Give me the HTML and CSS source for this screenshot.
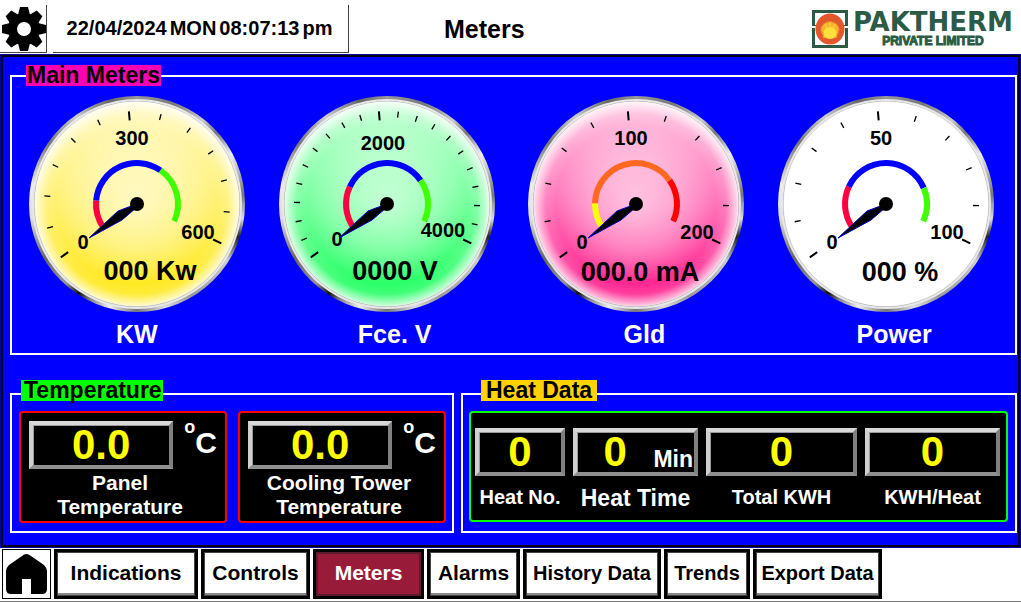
FILE: index.html
```
<!DOCTYPE html>
<html lang="en">
<head>
    <meta charset="UTF-8">
    <meta name="viewport" content="width=device-width, initial-scale=1.0">
    <title>Meters</title>
    <link rel="stylesheet" href="styles.css">
</head>
<body>
    <header class="topbar">
        <button class="settings-btn" aria-label="Settings">
            <svg viewBox="0 0 46 48" width="46" height="48">
                <g transform="translate(24 24)">
                    <circle r="16"/>
                    <path id="cog" d="M-6 -14L-4 -22H4L6 -14V14L4 22H-4L-6 14Z"/>
                    <use href="#cog" transform="rotate(45)"/>
                    <use href="#cog" transform="rotate(90)"/>
                    <use href="#cog" transform="rotate(135)"/>
                    <circle r="7" fill="#fff"/>
                </g>
            </svg>
        </button>
        <time class="clock" datetime="2024-04-22T20:07:13">
            <span>22/04/2024</span>
            <span>MON</span>
            <span>08:07:13</span>
            <span>pm</span>
        </time>
        <h1 class="page-title">Meters</h1>
        <div class="logo">
            <svg viewBox="0 0 36 38" width="36" height="38" aria-hidden="true">
                <path d="M1.500 15V1.500H34.500V15M1.500 18V36.500H34.500V18" fill="none" stroke="#2b5b45" stroke-width="3"/>
                <path d="M0 15.500H36" stroke="#2b5b45" stroke-width="1"/>
                <ellipse cx="18" cy="19" rx="14.500" ry="15.500" fill="#e2572b"/>
                <ellipse cx="18" cy="20" rx="9.500" ry="9" fill="#f0902d"/>
                <path d="M9 20a9 8 0 0 1 18 0l-2 4v4H11v-4Z" fill="#f7b52f" stroke="#e8782c" stroke-width="1" stroke-dasharray="2 1"/>
                <ellipse cx="18" cy="23" rx="6.500" ry="6" fill="#fce03c"/>
                <path d="M18 12v6M13 14l2 5M23 14l-2 5" stroke="#fbd23a" stroke-width="1"/>
            </svg>
            <div class="logo-text">
                <span class="logo-name">PAKTHERM</span>
                <span class="logo-sub">PRIVATE LIMITED</span>
            </div>
        </div>
    </header>

    <main class="screen">
        <section class="panel main-meters">
            <h2 class="panel-title pink">Main Meters</h2>
            <div class="meters">
                <figure class="meter">
                    <div class="bezel"><svg class="gauge" data-gauge="kw" viewBox="-108 -108 216 216"></svg></div>
                    <figcaption>KW</figcaption>
                </figure>
                <figure class="meter">
                    <div class="bezel"><svg class="gauge" data-gauge="volt" viewBox="-108 -108 216 216"></svg></div>
                    <figcaption class="shifted">Fce. V</figcaption>
                </figure>
                <figure class="meter">
                    <div class="bezel"><svg class="gauge" data-gauge="gld" viewBox="-108 -108 216 216"></svg></div>
                    <figcaption class="shifted">Gld</figcaption>
                </figure>
                <figure class="meter">
                    <div class="bezel"><svg class="gauge" data-gauge="power" viewBox="-108 -108 216 216"></svg></div>
                    <figcaption class="shifted">Power</figcaption>
                </figure>
            </div>
        </section>

        <div class="lower">
            <section class="panel temperature">
                <h2 class="panel-title green">Temperature</h2>
                <div class="temp-cards">
                    <div class="card red">
                        <div class="reading">
                            <output class="display" id="panelTemp">0.0</output>
                            <span class="degree"><sup>o</sup>C</span>
                        </div>
                        <label class="temp-label" for="panelTemp">Panel<br>Temperature</label>
                    </div>
                    <div class="card red">
                        <div class="reading">
                            <output class="display" id="towerTemp">0.0</output>
                            <span class="degree"><sup>o</sup>C</span>
                        </div>
                        <label class="temp-label" for="towerTemp">Cooling Tower<br>Temperature</label>
                    </div>
                </div>
            </section>

            <section class="panel heat">
                <h2 class="panel-title gold">Heat Data</h2>
                <div class="card lime heat-grid">
                    <div class="heat-item">
                        <output class="display" id="heatNo">0</output>
                        <label for="heatNo">Heat No.</label>
                    </div>
                    <div class="heat-item">
                        <div class="display">
                            <output class="value" id="heatTime">0</output>
                            <span class="unit">Min</span>
                        </div>
                        <label class="large" for="heatTime">Heat Time</label>
                    </div>
                    <div class="heat-item">
                        <output class="display" id="totalKwh">0</output>
                        <label for="totalKwh">Total KWH</label>
                    </div>
                    <div class="heat-item">
                        <output class="display" id="kwhHeat">0</output>
                        <label for="kwhHeat">KWH/Heat</label>
                    </div>
                </div>
            </section>
        </div>
    </main>

    <nav class="menu">
        <button class="home-btn" aria-label="Home">
            <svg viewBox="0 0 47 48" width="47" height="48">
                <path d="M19 6Q23 2 28 6L41 15Q44 18 44 21V39Q44 44 39 44H28V29H19V44H8Q3 44 3 39V21Q3 18 6 15Z"/>
            </svg>
        </button>
        <button class="menu-btn">Indications</button>
        <button class="menu-btn">Controls</button>
        <button class="menu-btn active">Meters</button>
        <button class="menu-btn">Alarms</button>
        <button class="menu-btn compact">History Data</button>
        <button class="menu-btn compact">Trends</button>
        <button class="menu-btn compact">Export Data</button>
    </nav>

    <script src="gauges.js"></script>
</body>
</html>
```
FILE: styles.css
```
* {
    box-sizing: border-box;
    margin: 0;
    padding: 0;
}

body {
    min-height: 100vh;
    display: flex;
    flex-direction: column;
    background-color: #fff;
    color: #000;
    font-family: "Liberation Sans", Arial, sans-serif;
    font-weight: bold;
}

button {
    font: inherit;
    cursor: pointer;
}

svg {
    display: block;
}

/* top bar */
.topbar {
    display: flex;
    align-items: stretch;
    height: 54px;
    padding: 5px 8px 1px 0;
}

.settings-btn {
    width: 47px;
    background: #fff;
    border: none;
    border-right: 1px solid #444;
    border-bottom: 1px solid #444;
}

.clock {
    display: flex;
    align-items: center;
    justify-content: center;
    gap: 3px;
    width: 296px;
    margin-left: 6px;
    padding-right: 2px;
    border-right: 1px solid #444;
    border-bottom: 1px solid #444;
    font-size: 20px;
}

.page-title {
    align-self: center;
    margin-left: 95px;
    font-size: 25px;
}

.logo {
    display: flex;
    align-items: flex-start;
    gap: 5px;
    margin-left: auto;
    padding-top: 5px;
    color: #2b5b45;
}

.logo-text {
    display: flex;
    flex-direction: column;
    align-items: center;
}

.logo-name {
    font-family: "DejaVu Sans", sans-serif;
    font-size: 26px;
    line-height: 25px;
}

.logo-sub {
    font-size: 12px;
    line-height: 12px;
    -webkit-text-stroke: 1px #2b5b45;
}

/* blue screen area */
.screen {
    flex: 1;
    padding: 21px 4px 15px 10px;
    background-color: #00f;
    box-shadow: inset 0 0 0 1px #0000a0, inset 0 0 0 3px #00001c;
}

.panel {
    border: 2px solid #fff;
}

.panel-title {
    width: max-content;
    font-size: 23px;
    line-height: 21px;
}

.pink {
    background-color: #ff00b4;
}

.green {
    background-color: #0f0;
}

.gold {
    background-color: #ffd200;
}

.main-meters {
    padding-bottom: 4px;
}

.main-meters .panel-title {
    margin: -12px 0 10px 14px;
    padding: 0 1px;
}

.meters {
    display: grid;
    grid-template-columns: repeat(4, 1fr);
    padding-right: 4px;
}

.meter {
    display: flex;
    flex-direction: column;
    align-items: center;
}

.bezel {
    width: 216px;
    max-width: 100%;
    border-radius: 50%;
    background: conic-gradient(#999, #777 20deg, #ccc 38deg, #777 48deg, #eee 62deg, #777 85deg, #ddd 98deg, #222 108deg, #ccc 122deg, #999 150deg, #ddd 165deg, #777 180deg, #eee 195deg, #888 206deg, #111 213deg, #999 222deg, #666 240deg, #ddd 262deg, #eee 280deg, #777 305deg, #ccc 325deg, #666 345deg, #999);
}

.gauge {
    width: 100%;
}

.gauge text {
    font-size: 20px;
    text-anchor: middle;
}

.gauge .gauge-value {
    font-size: 27px;
}

.meter figcaption {
    margin-top: 7px;
    color: #fff;
    font-size: 25px;
    line-height: 30px;
}

.meter .shifted {
    padding-left: 16px;
}

/* temperature and heat data */
.lower {
    display: grid;
    grid-template-columns: 444fr 556fr;
    gap: 7px;
    margin-top: 38px;
}

.temperature {
    padding: 0 6px 8px 7px;
}

.heat {
    padding: 0 7px 8px 6px;
}

.lower .panel-title {
    margin-top: -15px;
    margin-bottom: 10px;
}

.temperature .panel-title {
    margin-left: 2px;
    padding: 0 1px 0 3px;
}

.heat .panel-title {
    margin-left: 12px;
    padding: 0 5px;
}

.card {
    background-color: #000;
    border: 2px solid;
    border-radius: 4px;
    color: #fff;
}

.red {
    border-color: #f00;
}

.lime {
    border-color: #0f0;
}

.temp-cards {
    display: grid;
    grid-template-columns: 1fr 1fr;
    gap: 11px;
}

.temp-cards .card {
    padding: 8px 8px 2px;
}

.reading {
    display: flex;
    gap: 11px;
}

.reading .display {
    flex: 1;
}

.display {
    display: flex;
    align-items: center;
    justify-content: center;
    height: 48px;
    border: 4px solid;
    border-color: #d8d8d8 #808080 #909090 #d0d0d0;
    box-shadow: inset 1px 1px 0 #999;
    color: #ff0;
    font-size: 42px;
    line-height: 40px;
}

.display .value {
    flex: 1;
    text-align: center;
}

.display .unit {
    align-self: flex-end;
    padding-right: 1px;
    color: #fff;
    font-size: 23px;
    line-height: 26px;
}

.degree {
    display: flex;
    font-size: 30px;
    line-height: 44px;
}

.degree sup {
    font-size: 18px;
    line-height: 12px;
}

.temp-label {
    display: block;
    margin-top: 2px;
    padding-right: 6px;
    font-size: 21px;
    line-height: 24px;
    text-align: center;
}

.heat-grid {
    display: grid;
    grid-template-columns: 90fr 125fr 151fr 135fr;
    gap: 8px;
    padding: 15px 6px 8px 4px;
}

.heat-item label {
    display: block;
    margin-top: 8px;
    font-size: 20px;
    line-height: 26px;
    text-align: center;
    white-space: nowrap;
}

.heat-item .large {
    font-size: 23px;
    line-height: 28px;
}

/* bottom menu */
.menu {
    display: grid;
    grid-template-columns: 49fr 144fr 109fr 111fr 93fr 138fr 86fr 129fr 136fr;
    gap: 3px;
    height: 54px;
    padding: 1px 0 2px 2px;
    border-bottom: 1px solid #777;
}

.home-btn {
    background: #fff;
    border: 1px solid #000;
}

.menu-btn {
    padding-bottom: 2px;
    background-color: #fff;
    border: 3px solid #000;
    box-shadow: inset 0 0 0 1px #444, inset 0 -3px 0 #888;
    font-size: 21px;
    white-space: nowrap;
}

.menu-btn.compact {
    font-size: 20px;
}

.menu-btn.active {
    background-color: #981b3a;
    box-shadow: inset 0 0 0 2px #5a1c2c;
    color: #fff;
}
```
FILE: gauges.js
```
const SVG_NS = 'http://www.w3.org/2000/svg';

// the scale runs clockwise, angles are measured from 12 o'clock
const START = -125;
const SWEEP = 240;

const gauges = {
    kw: {
        color: '#ffe818', divisions: 12,
        bands: [[0, 1 / 6, '#ff0040'], [1 / 6, 2 / 3, '#0000ff'], [2 / 3, 1, '#40ff00']],
        labels: [['0', -54, 45], ['300', -5, -59], ['600', 61, 35]],
        value: ['000 Kw', 13, 76]
    },
    volt: {
        color: '#20ff60', divisions: 20,
        bands: [[0, 0.25, '#ff0040'], [0.25, 0.75, '#0000ff'], [0.75, 1, '#40ff00']],
        labels: [['0', -50, 42], ['2000', -4, -54], ['4000', 56, 33]],
        value: ['0000 V', 8, 76]
    },
    gld: {
        color: '#ff1c8c', divisions: 10,
        bands: [[0, 0.15, '#ffff00'], [0.15, 0.75, '#ff6820'], [0.75, 1, '#ff0000']],
        labels: [['0', -54, 45], ['100', -5, -59], ['200', 61, 35]],
        value: ['000.0 mA', 4, 77]
    },
    power: {
        color: '#ffffff', divisions: 10,
        bands: [[0, 0.25, '#ff0040'], [0.25, 0.8, '#0000ff'], [0.8, 1, '#40ff00']],
        labels: [['0', -54, 45], ['50', -5, -59], ['100', 61, 35]],
        value: ['000 %', 14, 77]
    }
};

function add(parent, tag, attrs, text) {
    const el = document.createElementNS(SVG_NS, tag);
    for (const key in attrs) {
        el.setAttribute(key, attrs[key]);
    }
    if (text) el.textContent = text;
    parent.appendChild(el);
    return el;
}

function point(fraction, r) {
    const a = (START + SWEEP * fraction) * Math.PI / 180;
    return [(r * Math.sin(a)).toFixed(2), (-r * Math.cos(a)).toFixed(2)];
}

function addStops(gradient, stops) {
    stops.forEach(function([offset, opacity]) {
        add(gradient, 'stop', { offset: offset, 'stop-color': '#fff', 'stop-opacity': opacity });
    });
}

function drawGauge(svg, name) {
    const g = gauges[name];

    // face: flat colour with a pale centre, a pale rim and a pale top
    const defs = add(svg, 'defs', {});
    addStops(add(defs, 'radialGradient', { id: name + 'Glow' }),
        [[0, 0.6], [0.45, 0.35], [0.78, 0.05], [0.88, 0.15], [1, 0.8]]);
    addStops(add(defs, 'linearGradient', { id: name + 'Top', x1: 0, y1: 0, x2: 0, y2: 1 }),
        [[0, 0.75], [0.5, 0.35], [0.88, 0], [1, 0]]);
    add(svg, 'circle', { r: 105, fill: '#e8e8e8' });
    add(svg, 'circle', { r: 102.5, fill: g.color, stroke: '#aaa' });
    add(svg, 'circle', { r: 102.5, fill: 'url(#' + name + 'Top)' });
    add(svg, 'circle', { r: 102.5, fill: 'url(#' + name + 'Glow)' });

    // coloured bands
    g.bands.forEach(function([from, to, color]) {
        const large = (to - from) * SWEEP > 180 ? 1 : 0;
        add(svg, 'path', {
            d: 'M' + point(from, 41) + 'A41 41 0 ' + large + ' 1 ' + point(to, 41),
            fill: 'none', stroke: color, 'stroke-width': 6
        });
    });

    // ticks, thicker at the start, middle and end
    for (let i = 0; i <= g.divisions; i++) {
        const major = i % (g.divisions / 2) === 0;
        add(svg, 'path', {
            d: 'M' + point(i / g.divisions, major ? 84 : 87) + 'L' + point(i / g.divisions, 93),
            stroke: '#000', 'stroke-width': major ? 2 : 1.3
        });
    }

    g.labels.forEach(function([text, x, y]) {
        add(svg, 'text', { x: x, y: y }, text);
    });
    add(svg, 'text', { x: g.value[1], y: g.value[2], class: 'gauge-value' }, g.value[0]);

    // needle and hub
    add(svg, 'path', { d: 'M-48 34L-19 7L-3 1L-1 4L-15 16Z', fill: '#000', stroke: '#0000c0', 'stroke-width': 1 });
    add(svg, 'circle', { r: 7, fill: '#000' });
}

document.querySelectorAll('.gauge').forEach(function(svg) {
    drawGauge(svg, svg.dataset.gauge);
});
```
